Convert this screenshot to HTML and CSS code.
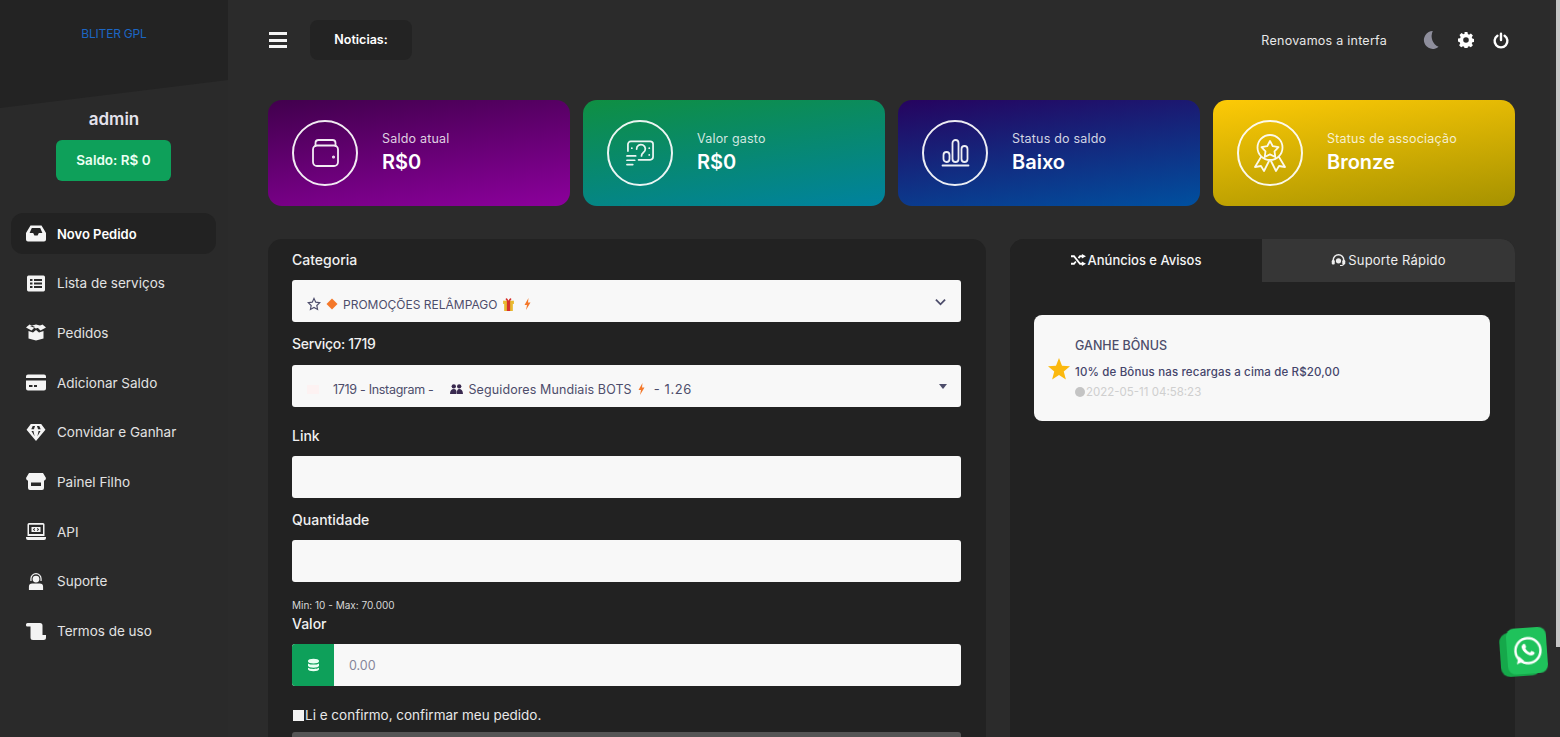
FILE: index.html
```html
<!DOCTYPE html>
<html lang="pt-BR">
<head>
  <meta charset="UTF-8">
  <meta name="viewport" content="width=device-width, initial-scale=1.0">
  <title>Novo Pedido - BLITER GPL</title>
  <link rel="stylesheet" href="styles.css">
</head>
<body>
  <div class="app">
    <aside class="sidebar">
      <div class="brand"><span class="brand-name">BLITER GPL</span></div>
      <div class="user-name">admin</div>
      <div class="balance">Saldo: R$ 0</div>
      <nav class="menu">
        <a class="menu-item active">
          <svg class="menu-icon" viewBox="0 0 20 16"><path d="M4.5 0h11L20 7.500V14a2 2 0 0 1-2 2H2a2 2 0 0 1-2-2V7.500zM3.600 7.500h3.600l1.200 2.400h3.200l1.200-2.400h3.600L14.200 2.400H5.800z" fill-rule="evenodd"/></svg>
          Novo Pedido
        </a>
        <a class="menu-item">
          <svg class="menu-icon" viewBox="0 0 20 16"><path d="M2.500 0h15A1.800 1.800 0 0 1 19 1.800v12.400a1.800 1.800 0 0 1-1.500 1.800h-15A1.800 1.800 0 0 1 1 14.200V1.800A1.800 1.800 0 0 1 2.500 0zM4 3.500v2h2.500v-2zm4 0v2h8v-2zM4 7v2h2.500V7zm4 0v2h8V7zm-4 3.500v2h2.500v-2zm4 0v2h8v-2z" fill-rule="evenodd"/></svg>
          Lista de serviços
        </a>
        <a class="menu-item">
          <svg class="menu-icon" viewBox="0 0 20 16"><path d="M0 3l3.500-3L9 2.500 5.500 6zM20 3l-3.500-3L11 2.500 14.500 6zM4 1.500L10 4l6-2.500L10 0zM10 5.500L7 8 2.500 6.500V14l7.500 2 7.500-2V6.500L13 8z"/></svg>
          Pedidos
        </a>
        <a class="menu-item">
          <svg class="menu-icon" viewBox="0 0 20 16"><path d="M2 0h16a2 2 0 0 1 2 2v1.500H0V2a2 2 0 0 1 2-2zM0 6h20v8a2 2 0 0 1-2 2H2a2 2 0 0 1-2-2zm3 4.500v2h3.500v-2zm5 0v2h3v-2z" fill-rule="evenodd"/></svg>
          Adicionar Saldo
        </a>
        <a class="menu-item">
          <svg class="menu-icon" viewBox="0 0 20 18"><path d="M4.500 0h11L20 6l-10 12L0 6zM6.500 2L5 5.500h2.800L9 2zM11 2l1.200 3.500H15L13.500 2zM5.200 7.500L8.500 13 7.300 7.500zM12.700 7.500L11.500 13l3.300-5.500z" fill-rule="evenodd"/></svg>
          Convidar e Ganhar
        </a>
        <a class="menu-item">
          <svg class="menu-icon" viewBox="0 0 20 17"><path d="M3 0h14l3 5a3 3 0 0 1-2 2.700V15a2 2 0 0 1-2 2H4a2 2 0 0 1-2-2V7.700A3 3 0 0 1 0 5zM5 9.500V13h10V9.500z" fill-rule="evenodd"/></svg>
          Painel Filho
        </a>
        <a class="menu-item">
          <svg class="menu-icon" viewBox="0 0 20 17"><path d="M3 0h14a1.500 1.500 0 0 1 1.500 1.500V13H1.500V1.500A1.500 1.500 0 0 1 3 0zm0 1.800V11h14V1.800zM0 14h20v1a2 2 0 0 1-2 2H2a2 2 0 0 1-2-2zM5.500 4h9v5h-9zm3 1L6.800 6.500 8.500 8l.7-.6-1-.9 1-.9zm3 0l-.7.6 1 .9-1 .9.7.6 1.700-1.500z" fill-rule="evenodd"/></svg>
          API
        </a>
        <a class="menu-item">
          <svg class="menu-icon" viewBox="0 0 20 18"><path d="M10 0a6 6 0 0 1 6 6v2.500h-1.300V6a4.700 4.700 0 0 0-9.400 0v2.500H4V6a6 6 0 0 1 6-6zM10 2.800A3.600 3.600 0 0 1 13.600 6.400 3.600 3.600 0 0 1 10 10 3.600 3.600 0 0 1 6.400 6.400 3.600 3.600 0 0 1 10 2.800zM6 11h8a3.500 3.500 0 0 1 3.500 3.500V18h-15v-3.500A3.500 3.500 0 0 1 6 11z"/></svg>
          Suporte
        </a>
        <a class="menu-item">
          <svg class="menu-icon" viewBox="0 0 20 17"><path d="M1.500 0H14a2.500 2.500 0 0 1 2.500 2.500V12H20v2.500A2.500 2.500 0 0 1 17.500 17H7a2.500 2.500 0 0 1-2.500-2.500V3.500H1.200A1.200 1.200 0 0 1 0 2.300V1.500A1.500 1.500 0 0 1 1.500 0z"/></svg>
          Termos de uso
        </a>
      </nav>
    </aside>

    <div class="page">
      <header class="topbar">
        <div class="hamburger"><span></span><span></span><span></span></div>
        <div class="news-tag">Noticias:</div>
        <div class="marquee">Renovamos a interfa</div>
        <div class="top-icons">
          <svg class="top-icon moon" viewBox="0 0 18 20"><path d="M11 0a10 10 0 1 0 6.500 17.600A13 13 0 0 1 11 0z"/></svg>
          <svg class="top-icon" viewBox="0 0 20 20"><path d="M8.200 0h3.600l.5 2.600 1.500.7 2.300-1.400 2.500 2.500-1.400 2.300.7 1.500 2.600.5v3.600l-2.600.5-.7 1.500 1.400 2.300-2.500 2.500-2.300-1.400-1.500.7-.5 2.600H8.200l-.5-2.600-1.500-.7-2.300 1.400-2.500-2.500 1.400-2.300-.7-1.500L0 11.800V8.200l2.600-.5.7-1.500-1.400-2.300 2.500-2.500 2.300 1.400 1.500-.7zM10 6.500a3.500 3.500 0 1 0 0 7 3.500 3.500 0 0 0 0-7z" fill-rule="evenodd"/></svg>
          <svg class="top-icon power" viewBox="0 0 20 20"><path d="M10 1.500v8M5.500 4a8 8 0 1 0 9 0" fill="none" stroke="#fff" stroke-width="3" stroke-linecap="round"/></svg>
        </div>
      </header>

      <section class="stats">
        <div class="stat stat-purple">
          <div class="stat-circle">
            <svg viewBox="0 0 28 28"><path d="M4 7V4a3 3 0 0 1 3-3h14a3 3 0 0 1 3 3v3"/><rect x="1.500" y="6.500" width="25" height="20.500" rx="4"/><circle class="dot" cx="22" cy="18" r=".6"/></svg>
          </div>
          <div>
            <div class="stat-label">Saldo atual</div>
            <div class="stat-value">R$0</div>
          </div>
        </div>
        <div class="stat stat-green">
          <div class="stat-circle">
            <svg viewBox="0 0 30 28"><path d="M2 12V5a3 3 0 0 1 3-3h20a3 3 0 0 1 3 3v13a3 3 0 0 1-3 3H13M11 10a4.500 4.500 0 1 1 7 3.500c-1.300 1-2 2-2 3.500M24 9h.1M6 9h.1M24 16h.1M1 17h9M1 21.500h8M1 26h6"/></svg>
          </div>
          <div>
            <div class="stat-label">Valor gasto</div>
            <div class="stat-value">R$0</div>
          </div>
        </div>
        <div class="stat stat-blue">
          <div class="stat-circle">
            <svg viewBox="0 0 28 28"><path d="M1 26.500h26M2 16a3 3 0 0 1 6 0v4a3 3 0 0 1-6 0zM11 4a3 3 0 0 1 6 0v16a3 3 0 0 1-6 0zM20 10a3 3 0 0 1 6 0v10a3 3 0 0 1-6 0z"/></svg>
          </div>
          <div>
            <div class="stat-label">Status do saldo</div>
            <div class="stat-value">Baixo</div>
          </div>
        </div>
        <div class="stat stat-yellow">
          <div class="stat-circle">
            <svg class="badge" viewBox="0 0 32 38"><path d="M16 1a12.500 12.500 0 1 1 0 25 12.500 12.500 0 0 1 0-25zM16 7l2.800 5.200 5.700 1-4 4.100.8 5.700-5.300-2.600-5.300 2.600.8-5.700-4-4.100 5.700-1zM7 23L1 33l6-1 3 5 5-10M25 23l6 10-6-1-3 5-5-10"/></svg>
          </div>
          <div>
            <div class="stat-label">Status de associação</div>
            <div class="stat-value">Bronze</div>
          </div>
        </div>
      </section>

      <section class="columns">
        <form class="order-form">
          <label class="field-label first">Categoria</label>
          <div class="select">
            <svg class="emo star-outline" viewBox="0 0 24 24"><path d="M12 2.500l3 6.300 6.800.9-5 4.800 1.300 6.800-6.100-3.300-6.100 3.300 1.300-6.800-5-4.800 6.800-.9z"/></svg>
            <svg class="emo" viewBox="0 0 24 24"><path d="M12 1l11 11-11 11L1 12z" fill="#f4782a"/></svg>
            <span class="select-text">PROMOÇÕES RELÂMPAGO</span>
            <svg class="emo gift" viewBox="0 0 24 24"><path d="M2 5h20v6H2z" fill="#e8b92e"/><path d="M4 11h16v13H4z" fill="#e8b92e"/><path d="M9 5h6v19H9z" fill="#d6302b"/><path d="M12 6C9 6 6 4 7 1.500S11 2 12 6c1-4 4-7 5-4.500S15 6 12 6z" fill="#d6302b"/></svg>
            <svg class="emo bolt" viewBox="0 0 14 24"><path d="M9 0L1 14h5l-2 10 9-15H8z" fill="#f4782a"/></svg>
            <svg class="chevron" viewBox="0 0 12 8"><path d="M1 1.500l5 5 5-5"/></svg>
          </div>

          <label class="field-label service">Serviço: 1719</label>
          <div class="select">
            <span class="ghost-flag"></span>
            <span class="select-text service-id">1719 - Instagram -</span>
            <svg class="emo people" viewBox="0 0 24 20"><circle cx="7" cy="5" r="4" fill="#3a2a50"/><circle cx="17" cy="5" r="4" fill="#3a2a50"/><path d="M0 19c0-6 3-9 7-9s6 3 5 9zM13 19c-1-6 1-9 4-9 4 0 7 3 7 9z" fill="#3a2a50"/></svg>
            <span class="select-text service-name">Seguidores Mundiais BOTS</span>
            <svg class="emo bolt service-bolt" viewBox="0 0 14 24"><path d="M9 0L1 14h5l-2 10 9-15H8z" fill="#f4782a"/></svg>
            <span class="select-text service-price">- 1.26</span>
            <span class="caret"></span>
          </div>

          <label class="field-label link">Link</label>
          <input class="text-input" type="text">

          <label class="field-label quantity">Quantidade</label>
          <input class="text-input" type="text">
          <small class="hint">Min: 10 - Max: 70.000</small>

          <label class="field-label valor">Valor</label>
          <div class="input-group">
            <span class="addon">
              <svg viewBox="0 0 14 16"><path d="M7 0c3.800 0 7 1.100 7 2.500v1C14 4.900 10.800 6 7 6S0 4.900 0 3.500v-1C0 1.100 3.200 0 7 0zM0 6c1.500 1 4 1.500 7 1.500S12.500 7 14 6v3c0 1.400-3.200 2.500-7 2.500S0 10.400 0 9zM0 11.500c1.500 1 4 1.500 7 1.500s5.500-.5 7-1.500v2C14 14.900 10.800 16 7 16s-7-1.100-7-2.500z"/></svg>
            </span>
            <span class="group-value">0.00</span>
          </div>

          <div class="confirm"><span class="check"></span>Li e confirmo, confirmar meu pedido.</div>
          <div class="submit"></div>
        </form>

        <div class="notice-panel">
          <div class="tabs">
            <div class="tab active">
              <svg class="tab-icon" viewBox="0 0 20 16"><path d="M0 3h4l8 10h3M0 13h4l2.500-3M10 5.500L12 3h3" fill="none" stroke="#fff" stroke-width="2.400"/><path d="M14.500 0L20 3l-5.500 3zM14.500 10l5.500 3-5.500 3z" fill="#fff"/></svg>
              Anúncios e Avisos
            </div>
            <div class="tab">
              <svg class="tab-icon" viewBox="0 0 18 16"><path d="M2 9V8a7 7 0 0 1 14 0v1" fill="none" stroke="#eee" stroke-width="2"/><rect x="0" y="8" width="4" height="6" rx="1.500" fill="#eee"/><rect x="14" y="8" width="4" height="6" rx="1.500" fill="#eee"/><circle cx="9" cy="9" r="3.500" fill="#eee"/><path d="M16 13c0 2-2 2.500-5 2.500" fill="none" stroke="#eee" stroke-width="1.500"/></svg>
              Suporte Rápido
            </div>
          </div>
          <div class="notice-body">
            <article class="notice">
              <svg class="notice-star" viewBox="0 0 24 24"><path d="M12 0l3.300 8.500 8.700.5-6.800 5.700 2.300 8.800L12 18.600 4.500 23.500l2.300-8.800L0 9l8.700-.5z"/></svg>
              <div>
                <div class="notice-title">GANHE BÔNUS</div>
                <div class="notice-text">10% de Bônus nas recargas a cima de R$20,00</div>
                <div class="notice-date"><span class="clock"></span>2022-05-11 04:58:23</div>
              </div>
            </article>
          </div>
        </div>
      </section>
    </div>
    <div class="scroll-track"><div class="scroll-thumb"></div></div>
  </div>

  <a class="whatsapp">
    <svg viewBox="0 0 47 49">
      <rect x="0" y="5" width="40" height="44" rx="9" fill="#15a84a"/>
      <rect x="7" y="1" width="40" height="46" rx="8" fill="#1fc25b"/>
      <circle cx="28" cy="24" r="12.500" fill="none" stroke="#fff" stroke-width="2.400"/>
      <path d="M16 37l2.500-8 5 5z" fill="#fff"/>
      <path d="M23 18c1-1.500 2-1.500 2.500-.5l1 2.500-1 1.500c1 2 2.500 3.500 4.500 4.500l1.500-1.500 2.500 1.200c.8.500.5 1.800-.5 2.500-1.500 1.200-3.500 1-6-.5-3-1.800-5-4.500-5.500-7-.2-1 0-2 1-2.700z" fill="#fff"/>
    </svg>
  </a>
</body>
</html>
```

FILE: styles.css
```css
* {
  box-sizing: border-box;
}
html, body {
  margin: 0;
  height: 100%;
  overflow: hidden;
}
body {
  font-family: Inter, "Open Sans", sans-serif;
  font-size: 13px;
  background: #2b2b2b;
  color: #f2f2f2;
}
.app {
  display: flex;
  height: 737px;
  overflow: hidden;
}

/* sidebar */
.sidebar {
  width: 228px;
  flex: none;
  background: #2a2a2a;
}
.brand {
  height: 108px;
  background: #232323;
  clip-path: polygon(0 0, 100% 0, 100% 74%, 0 100%);
  text-align: center;
  padding-top: 25px;
}
.brand-name {
  color: #1c66c4;
  font-size: 12px;
  line-height: 14px;
  letter-spacing: -0.2px;
}
.user-name {
  text-align: center;
  font-size: 17px;
  font-weight: 600;
  color: #e4e2ec;
  line-height: 22px;
}
.balance {
  width: 115px;
  height: 41px;
  margin: 10px 0 0 56px;
  background: #0ea05a;
  border-radius: 6px;
  text-align: center;
  line-height: 41px;
  font-size: 13.5px;
  font-weight: 600;
  color: #eafff2;
}
.menu {
  margin: 32px 12px 0 11px;
  display: flex;
  flex-direction: column;
  gap: 8.7px;
}
.menu-item {
  height: 41px;
  display: flex;
  align-items: center;
  gap: 11px;
  padding-left: 15px;
  border-radius: 12px;
  font-size: 13.5px;
  color: #e2e2e2;
}
.menu-item.active {
  background: #222;
  color: #fff;
  font-size: 13px;
  font-weight: 600;
}
.menu-icon {
  width: 20px;
  height: 17px;
  fill: #f4f4f4;
  flex: none;
}

/* top bar */
.page {
  flex: 1;
  padding: 0 41px 0 40px;
  min-width: 0;
}
.scroll-track {
  width: 4px;
  flex: none;
  background: #2b2b2b;
}
.scroll-thumb {
  height: 647px;
  background: #c6c6c6;
}
.topbar {
  height: 80px;
  display: flex;
  align-items: center;
}
.hamburger {
  width: 18px;
  display: flex;
  flex-direction: column;
  gap: 3.5px;
  margin: 0 23px 0 1px;
}
.hamburger span {
  display: block;
  height: 3px;
  background: #f4f4f4;
}
.news-tag {
  width: 102px;
  height: 40px;
  background: #232323;
  border-radius: 8px;
  text-align: center;
  line-height: 40px;
  font-size: 12.5px;
  font-weight: 600;
  color: #fff;
}
.marquee {
  margin-left: auto;
  white-space: nowrap;
  font-size: 12.5px;
  letter-spacing: 0.25px;
  color: #e8e8e8;
}
.top-icons {
  display: flex;
  align-items: center;
  gap: 19px;
  margin: 0 6px 0 36px;
}
.top-icon {
  width: 16px;
  height: 16px;
  fill: #fff;
  flex: none;
}
.moon {
  fill: #8e8e9c;
  height: 18px;
}
.power {
  height: 17px;
}

/* stat cards */
.stats {
  display: grid;
  grid-template-columns: repeat(4, 1fr);
  gap: 13px;
  margin-top: 20px;
}
.stat {
  height: 106px;
  border-radius: 14px;
  padding: 0 24px;
  display: flex;
  align-items: center;
  gap: 24px;
}
.stat-purple {
  background: linear-gradient(172deg, #41004d, #8c009c);
}
.stat-green {
  background: linear-gradient(172deg, #0f8f42, #00829f);
}
.stat-blue {
  background: linear-gradient(172deg, #26035f, #00509f);
}
.stat-yellow {
  background: linear-gradient(172deg, #fdca06, #a69200);
}
.stat-circle {
  width: 66px;
  height: 66px;
  border: 2px solid #fff;
  border-radius: 50%;
  flex: none;
  display: flex;
  align-items: center;
  justify-content: center;
  opacity: 0.92;
}
.stat-circle svg {
  width: 29px;
  height: 28px;
  fill: none;
  stroke: #fff;
  stroke-width: 1.8;
  stroke-linecap: round;
  stroke-linejoin: round;
}
.stat-circle svg.badge {
  width: 32px;
  height: 38px;
}
.stat-label {
  font-size: 12.5px;
  line-height: 18px;
  color: rgba(255, 255, 255, 0.82);
  letter-spacing: 0.2px;
}
.stat-value {
  font-size: 20px;
  font-weight: 600;
  line-height: 28px;
  color: #fff;
}

/* order form */
.columns {
  display: grid;
  grid-template-columns: 718px 505px;
  gap: 24px;
  margin-top: 33px;
}
.order-form {
  background: #222;
  border-radius: 14px 14px 0 0;
  padding: 0 25px 0 24px;
  height: 520px;
}
.field-label {
  display: block;
  font-size: 14px;
  line-height: 20px;
  font-weight: 500;
  color: #f0f0f0;
}
.first {
  padding-top: 11px;
  height: 41px;
}
.service {
  margin-top: 12px;
  margin-bottom: 11px;
  letter-spacing: -0.3px;
}
.link {
  margin-top: 19px;
  margin-bottom: 10px;
}
.quantity {
  margin-top: 12px;
  margin-bottom: 10px;
}
.valor {
  margin-top: 2px;
  margin-bottom: 10px;
}
.select {
  height: 42px;
  background: #f8f8f8;
  border-radius: 3px;
  display: flex;
  align-items: center;
  padding: 6px 14px 0 15px;
  gap: 5px;
  position: relative;
  color: #4d4d6b;
  font-size: 12px;
}
.service-id {
  font-size: 12.5px;
  letter-spacing: -0.3px;
  margin-right: 11px;
}
.service-name {
  font-size: 12.5px;
  letter-spacing: 0.1px;
}
.service-price {
  font-size: 13px;
  letter-spacing: 0.6px;
  margin-left: 3px;
}
.emo {
  width: 12px;
  height: 12px;
  flex: none;
}
.gift {
  width: 13px;
  height: 13px;
}
.star-outline {
  width: 14px;
  height: 14px;
  fill: none;
  stroke: #4d4d6b;
  stroke-width: 2;
}
.bolt {
  width: 9px;
  margin: 0 3px;
}
.service-bolt {
  margin: 0;
}
.people {
  width: 13px;
  margin: 0 1px 0 0;
}
.ghost-flag {
  width: 12px;
  height: 9px;
  margin-right: 9px;
  background: #fdf2f2;
}
.chevron {
  width: 11px;
  height: 8px;
  position: absolute;
  right: 15px;
  top: 18px;
  fill: none;
  stroke: #4d4d6b;
  stroke-width: 2;
}
.caret {
  position: absolute;
  right: 14px;
  top: 19px;
  border-left: 4px solid transparent;
  border-right: 4px solid transparent;
  border-top: 5px solid #4d4d6b;
}
.text-input {
  display: block;
  width: 100%;
  height: 42px;
  background: #f8f8f8;
  border: 0;
  border-radius: 3px;
}
.hint {
  display: block;
  margin-top: 16px;
  font-size: 10px;
  line-height: 14px;
  color: #d8d8d8;
}
.input-group {
  display: flex;
  height: 42px;
  background: #f8f8f8;
  border-radius: 3px;
  overflow: hidden;
}
.addon {
  width: 42px;
  background: #0ea05a;
  display: flex;
  align-items: center;
  justify-content: center;
}
.addon svg {
  width: 11px;
  height: 14px;
  fill: #eafff2;
}
.group-value {
  padding: 1px 0 0 15px;
  line-height: 42px;
  font-size: 12.5px;
  color: #86869a;
}
.confirm {
  display: flex;
  align-items: center;
  margin-top: 19px;
  font-size: 13.5px;
  line-height: 20px;
  color: #e8e8e8;
}
.check {
  width: 11px;
  height: 11px;
  background: #f4f4f4;
  margin: 0 1px 0 1px;
}
.submit {
  height: 40px;
  margin-top: 7px;
  background: #555;
  border-radius: 3px;
}

/* notices */
.notice-panel {
  background: #222;
  border-radius: 14px 14px 0 0;
  height: 520px;
}
.tabs {
  display: grid;
  grid-template-columns: 252px 253px;
  height: 43px;
}
.tab {
  display: flex;
  align-items: center;
  justify-content: center;
  gap: 2px;
  padding-bottom: 2px;
  font-size: 13px;
  letter-spacing: 0.2px;
  color: #eee;
  background: #363636;
  border-radius: 0 14px 0 0;
}
.tab.active {
  background: #222;
  color: #f5f5f5;
  border-radius: 14px 0 0 0;
  font-weight: 500;
  letter-spacing: 0;
}
.tab-icon {
  width: 15px;
  height: 12px;
  flex: none;
}
.notice-body {
  padding: 33px 25px 0 24px;
}
.notice {
  height: 106px;
  background: #f8f8f8;
  border-radius: 8px;
  display: flex;
  align-items: center;
  gap: 5px;
  padding: 1px 0 0 14px;
}
.notice-star {
  width: 22px;
  height: 22px;
  fill: #fbb90f;
  flex: none;
}
.notice-title {
  font-size: 12.5px;
  line-height: 18px;
  font-weight: 500;
  color: #4d4d6b;
}
.notice-text {
  font-size: 11.5px;
  line-height: 17px;
  letter-spacing: 0.15px;
  margin-top: 9px;
  color: #45456b;
  font-weight: 500;
}
.notice-date {
  display: flex;
  align-items: center;
  font-size: 11.5px;
  line-height: 16px;
  margin-top: 3px;
  color: #cfcfcf;
}
.clock {
  width: 10px;
  height: 10px;
  border-radius: 50%;
  background: #c4c4c4;
  margin-right: 1px;
}

/* floating button */
.whatsapp {
  position: fixed;
  left: 1500px;
  top: 627px;
  width: 47px;
  height: 49px;
  transform: rotate(-4deg);
}
.whatsapp svg {
  width: 47px;
  height: 49px;
  display: block;
}
```
